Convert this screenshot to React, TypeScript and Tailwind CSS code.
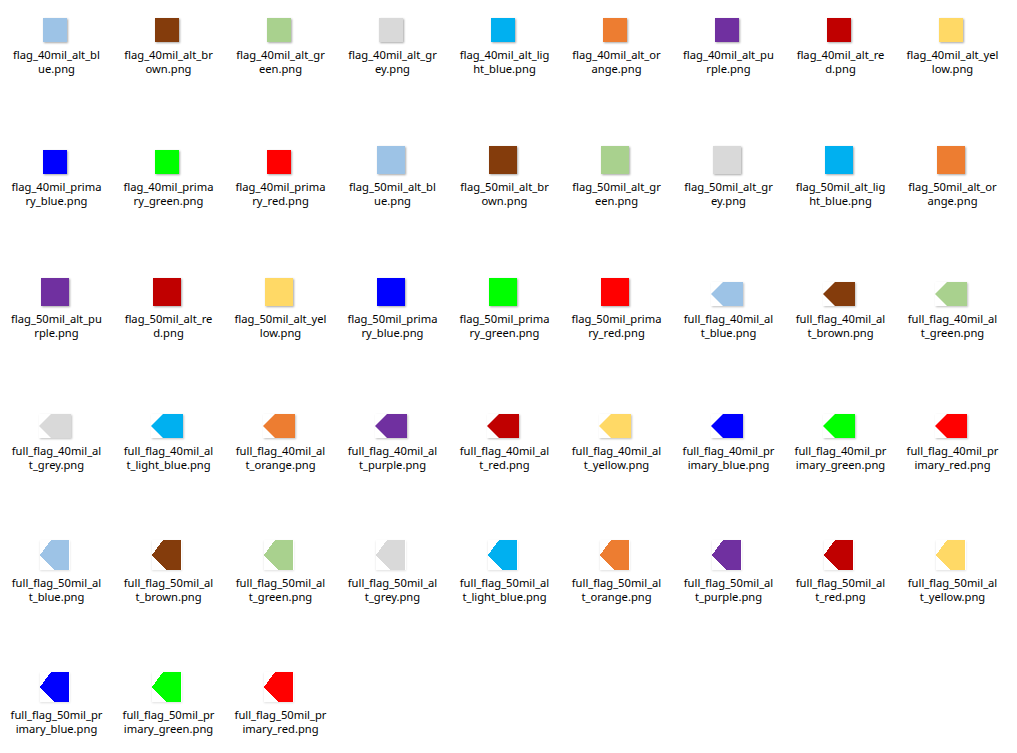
const colors: Record<string, string> = {
  alt_blue: "#9dc3e6",
  alt_brown: "#843c0c",
  alt_green: "#a9d18e",
  alt_grey: "#d9d9d9",
  alt_light_blue: "#00b0f0",
  alt_orange: "#ed7d31",
  alt_purple: "#7030a0",
  alt_red: "#c00000",
  alt_yellow: "#ffd966",
  primary_blue: "#0000ff",
  primary_green: "#00ff00",
  primary_red: "#ff0000",
};

type Kind = "flag40" | "flag50" | "full40" | "full50";

// name, where Explorer wraps it, icon kind, colour key
const files: [string, string, Kind, string][] = [
  ["flag_40mil_alt_bl", "ue.png", "flag40", "alt_blue"],
  ["flag_40mil_alt_br", "own.png", "flag40", "alt_brown"],
  ["flag_40mil_alt_gr", "een.png", "flag40", "alt_green"],
  ["flag_40mil_alt_gr", "ey.png", "flag40", "alt_grey"],
  ["flag_40mil_alt_lig", "ht_blue.png", "flag40", "alt_light_blue"],
  ["flag_40mil_alt_or", "ange.png", "flag40", "alt_orange"],
  ["flag_40mil_alt_pu", "rple.png", "flag40", "alt_purple"],
  ["flag_40mil_alt_re", "d.png", "flag40", "alt_red"],
  ["flag_40mil_alt_yel", "low.png", "flag40", "alt_yellow"],
  ["flag_40mil_prima", "ry_blue.png", "flag40", "primary_blue"],
  ["flag_40mil_prima", "ry_green.png", "flag40", "primary_green"],
  ["flag_40mil_prima", "ry_red.png", "flag40", "primary_red"],
  ["flag_50mil_alt_bl", "ue.png", "flag50", "alt_blue"],
  ["flag_50mil_alt_br", "own.png", "flag50", "alt_brown"],
  ["flag_50mil_alt_gr", "een.png", "flag50", "alt_green"],
  ["flag_50mil_alt_gr", "ey.png", "flag50", "alt_grey"],
  ["flag_50mil_alt_lig", "ht_blue.png", "flag50", "alt_light_blue"],
  ["flag_50mil_alt_or", "ange.png", "flag50", "alt_orange"],
  ["flag_50mil_alt_pu", "rple.png", "flag50", "alt_purple"],
  ["flag_50mil_alt_re", "d.png", "flag50", "alt_red"],
  ["flag_50mil_alt_yel", "low.png", "flag50", "alt_yellow"],
  ["flag_50mil_prima", "ry_blue.png", "flag50", "primary_blue"],
  ["flag_50mil_prima", "ry_green.png", "flag50", "primary_green"],
  ["flag_50mil_prima", "ry_red.png", "flag50", "primary_red"],
  ["full_flag_40mil_al", "t_blue.png", "full40", "alt_blue"],
  ["full_flag_40mil_al", "t_brown.png", "full40", "alt_brown"],
  ["full_flag_40mil_al", "t_green.png", "full40", "alt_green"],
  ["full_flag_40mil_al", "t_grey.png", "full40", "alt_grey"],
  ["full_flag_40mil_al", "t_light_blue.png", "full40", "alt_light_blue"],
  ["full_flag_40mil_al", "t_orange.png", "full40", "alt_orange"],
  ["full_flag_40mil_al", "t_purple.png", "full40", "alt_purple"],
  ["full_flag_40mil_al", "t_red.png", "full40", "alt_red"],
  ["full_flag_40mil_al", "t_yellow.png", "full40", "alt_yellow"],
  ["full_flag_40mil_pr", "imary_blue.png", "full40", "primary_blue"],
  ["full_flag_40mil_pr", "imary_green.png", "full40", "primary_green"],
  ["full_flag_40mil_pr", "imary_red.png", "full40", "primary_red"],
  ["full_flag_50mil_al", "t_blue.png", "full50", "alt_blue"],
  ["full_flag_50mil_al", "t_brown.png", "full50", "alt_brown"],
  ["full_flag_50mil_al", "t_green.png", "full50", "alt_green"],
  ["full_flag_50mil_al", "t_grey.png", "full50", "alt_grey"],
  ["full_flag_50mil_al", "t_light_blue.png", "full50", "alt_light_blue"],
  ["full_flag_50mil_al", "t_orange.png", "full50", "alt_orange"],
  ["full_flag_50mil_al", "t_purple.png", "full50", "alt_purple"],
  ["full_flag_50mil_al", "t_red.png", "full50", "alt_red"],
  ["full_flag_50mil_al", "t_yellow.png", "full50", "alt_yellow"],
  ["full_flag_50mil_pr", "imary_blue.png", "full50", "primary_blue"],
  ["full_flag_50mil_pr", "imary_green.png", "full50", "primary_green"],
  ["full_flag_50mil_pr", "imary_red.png", "full50", "primary_red"],
];

const FlagIcon = ({ kind, color }: { kind: Kind; color: string }) => {
  if (kind === "flag40") {
    return <div className="h-6 w-6 shadow-[1px_1px_2px_rgba(0,0,0,0.35)]" style={{ background: color }} />;
  }
  if (kind === "flag50") {
    return <div className="h-7 w-7 shadow-[1px_1px_2px_rgba(0,0,0,0.35)]" style={{ background: color }} />;
  }
  if (kind === "full40") {
    return (
      <svg width="32" height="24" viewBox="0 0 32 24" className="block bg-white shadow-[1px_1px_2px_rgba(0,0,0,0.25)]">
        <polygon points="12,0 32,0 32,24 12,24 0,12" fill={color} />
      </svg>
    );
  }
  return (
    <svg width="30" height="30" viewBox="0 0 30 30" className="block bg-white shadow-[0_1px_2px_rgba(0,0,0,0.12)]" shapeRendering="crispEdges">
      <polygon points="11,0 29,0 29,30 14,30 0,15" fill={color} />
    </svg>
  );
};

const App = () => {
  return (
    <div className="h-[753px] w-[1017px] overflow-hidden bg-white font-['Noto_Sans',sans-serif] text-[11.2px] text-black">
      <div className="grid grid-cols-[repeat(9,112px)] auto-rows-[132px]">
        {files.map(([first, second, kind, key], i) => (
          <div key={i} className="flex flex-col items-center">
            <div className="flex h-[42px] items-end justify-center pr-0.5">
              <FlagIcon kind={kind} color={colors[key]} />
            </div>
            <div className="mt-1.5 pl-px text-center leading-[14px] whitespace-nowrap">
              <div>{first}</div>
              <div>{second}</div>
            </div>
          </div>
        ))}
      </div>
    </div>
  );
};

export default App;
